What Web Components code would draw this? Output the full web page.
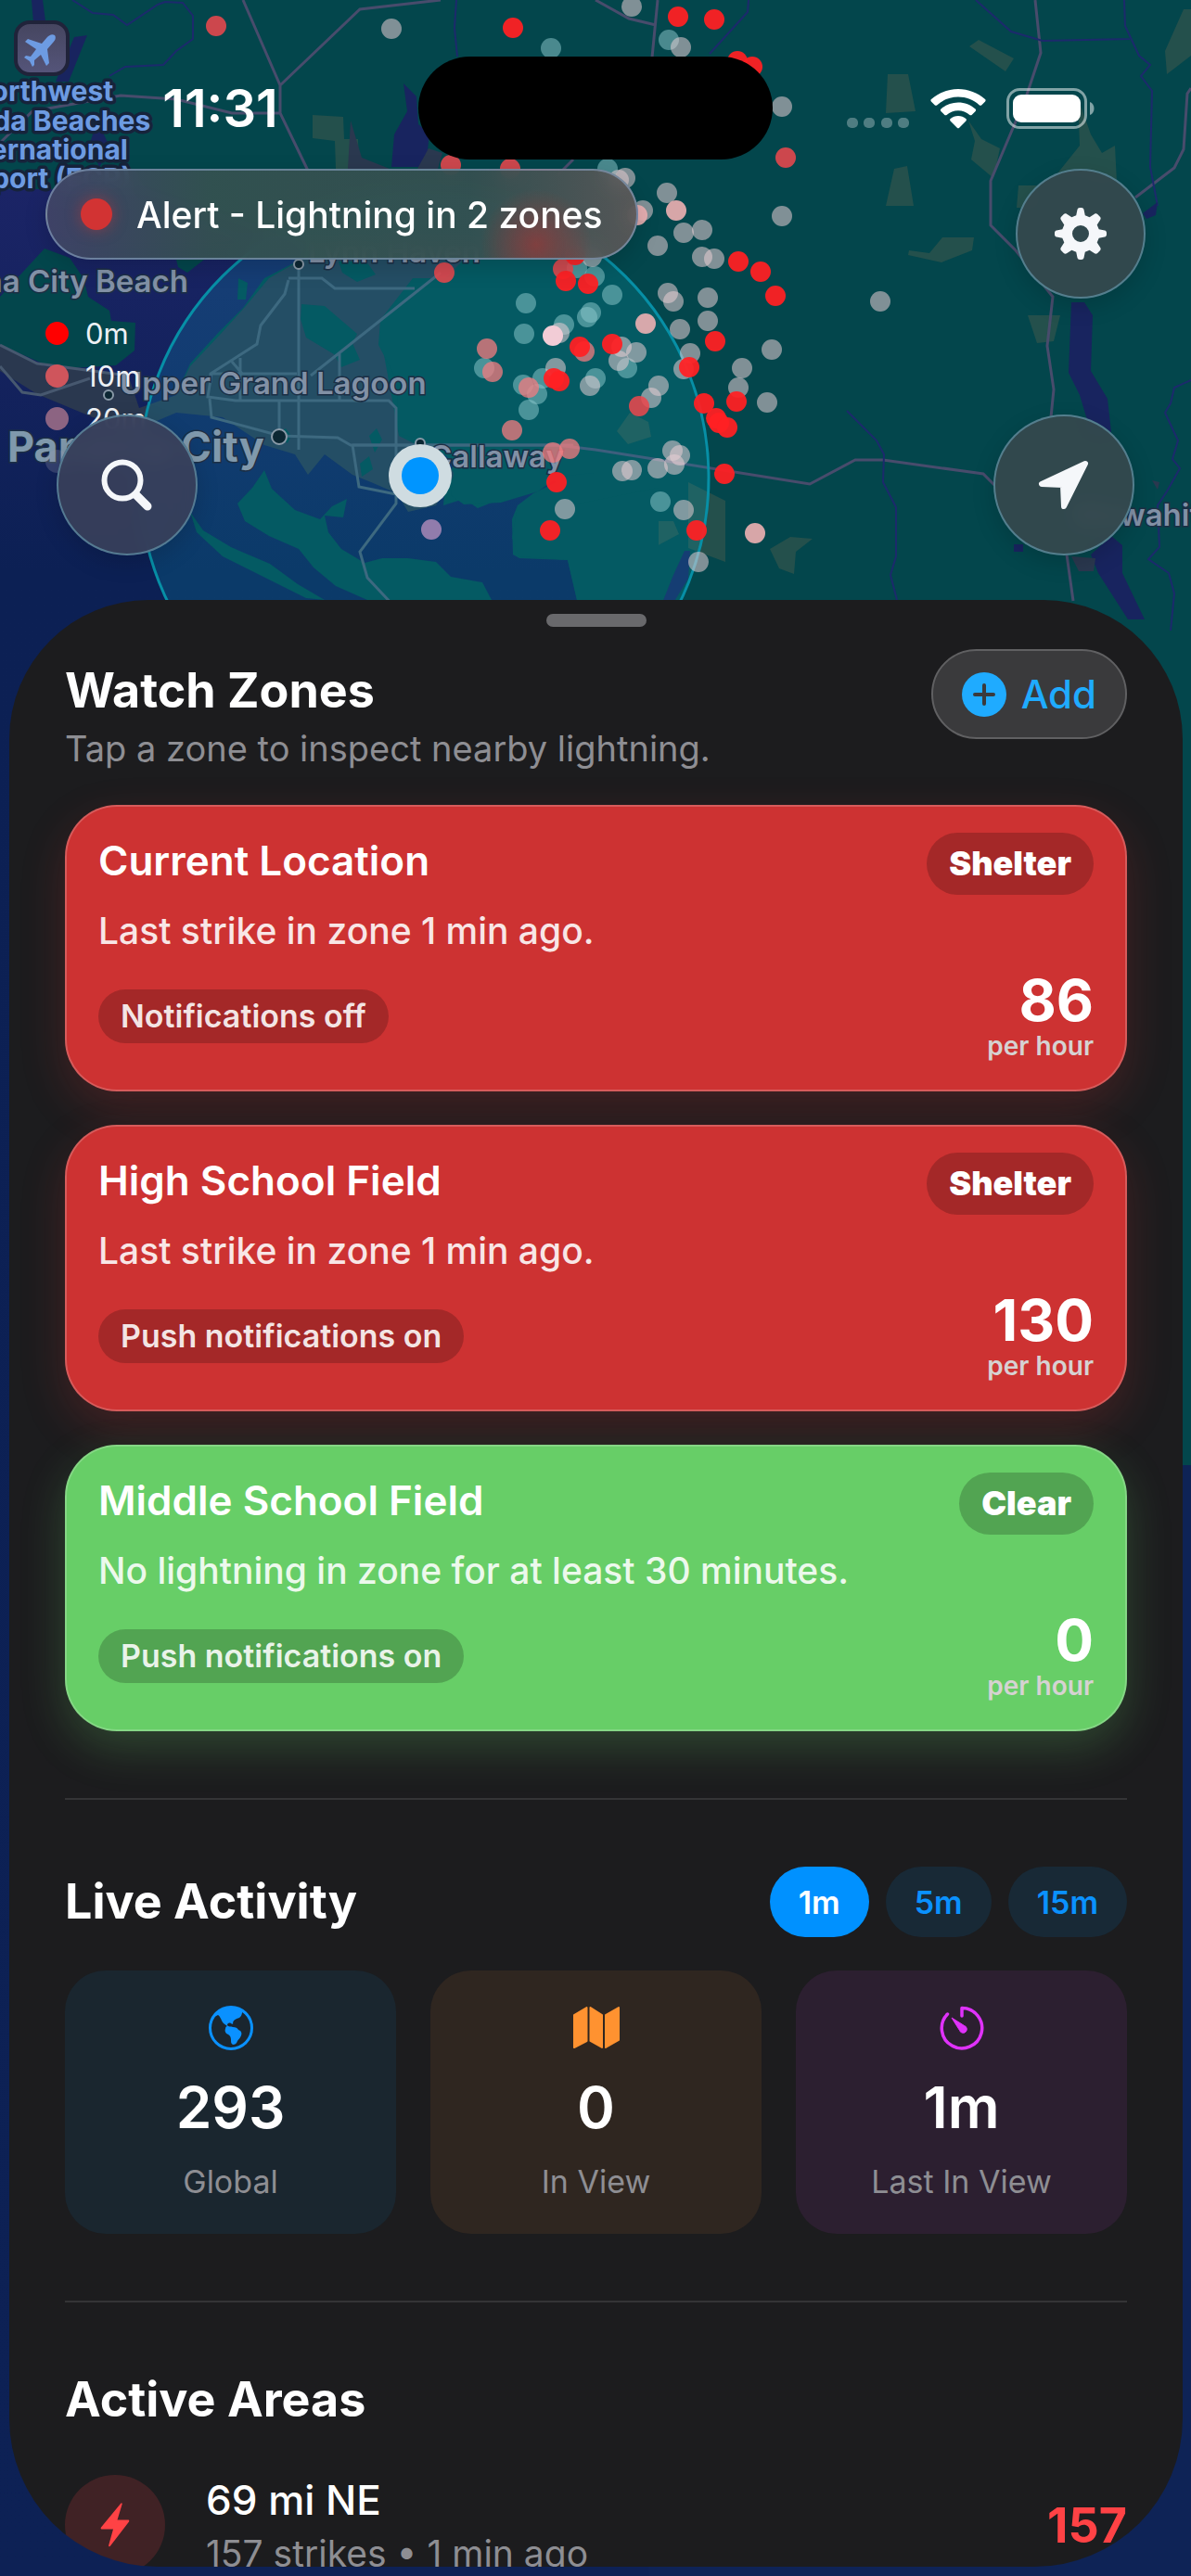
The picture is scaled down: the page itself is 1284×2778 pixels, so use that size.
<!DOCTYPE html>
<html lang="en">
<head>
<meta charset="utf-8">
<meta name="viewport" content="width=device-width, initial-scale=1">
<title>Lightning Watch</title>
<style>
    html, body {
        margin: 0;
        height: 100%;
        background: #0c2054;
    }
    body {
        font-family: Inter, "Liberation Sans", sans-serif;
        color: #fff;
    }
</style>
</head>
<body>
<lightning-app></lightning-app>

<script>
const html = String.raw;

function define(name, markup, setup) {
    const template = document.createElement('template');
    template.innerHTML = markup;
    customElements.define(name, class extends HTMLElement {
        constructor() {
            super();
            this.attachShadow({mode: 'open'});
            this.shadowRoot.appendChild(template.content.cloneNode(true));
        }
        connectedCallback() {
            if (setup) setup(this, this.shadowRoot);
        }
    });
}

// strikes by age: [x, y] on the map canvas
const strikes = {
    old: [[594,52],[721,43],[655,182],[641,298],[622,289],[660,318],[567,327],[565,360],[637,337],[633,342],[608,350],
        [522,397],[676,397],[564,415],[585,408],[579,425],[570,442],[642,408],[712,541]],
    aged: [[422,31],[681,7],[734,51],[843,115],[674,192],[667,194],[719,208],[843,233],[693,227],[737,251],[757,248],
        [709,265],[757,277],[770,279],[638,277],[603,359],[720,316],[726,325],[763,321],[763,346],[733,355],[832,377],
        [800,397],[796,418],[827,434],[670,374],[686,380],[667,389],[744,381],[737,398],[599,397],[636,416],[710,416],
        [702,429],[609,549],[725,486],[733,491],[727,501],[709,505],[671,508],[681,507],[737,550],[753,606],[949,325]],
    pale: [[729,227],[687,232],[696,349],[814,575]],
    white: [[596,362]],
    violet: [[465,571]],
    mid: [[525,376],[531,401],[570,418],[552,464],[596,488],[614,484],[630,379]],
    recent: [[233,28],[486,178],[550,182],[479,294],[847,170],[607,290],[689,438]],
    fresh: [[553,30],[731,18],[770,21],[795,66],[811,72],[796,282],[820,293],[836,319],[620,275],[610,303],[634,306],
        [771,368],[794,433],[625,374],[660,371],[743,396],[597,408],[603,411],[759,435],[772,451],[775,456],[784,461],
        [600,520],[593,572],[781,511],[751,572]]
};

define('map-view', html`
    <style>
        :host { display: block; overflow: hidden; background: #03464c; }
        svg { display: block; width: 100%; height: 100%; }
        .water { fill: #18245f; }
        .town { fill: #2a384f; }
        .park { fill: #24504c; }
        .land { fill: #03464c; }
        .road { fill: none; stroke: #484c6c; stroke-width: 3; }
        .street { fill: none; stroke: #47586f; stroke-width: 3; }
        .river { fill: none; stroke: #1c2a6c; stroke-width: 2; }
        .label { font-size: 33px; font-weight: 600; fill: #8291a6; stroke: #1c2f45; stroke-width: 3; paint-order: stroke; }
        .city { font-size: 45px; font-weight: 700; fill: #8099ac; }
        .poi { font-size: 30px; font-weight: 700; fill: #6d9be2; stroke: #16233b; stroke-width: 7; stroke-linejoin: round; text-anchor: middle; }
        .pin { fill: #0c2733; stroke: #8a9aa8; stroke-width: 2; }
        .old { fill: #8cc8cc; opacity: .52; }
        .aged { fill: #e8cdd3; opacity: .55; }
        .pale { fill: #eeb0b2; opacity: .9; }
        .white { fill: #f2ccd6; }
        .violet { fill: #a084b4; opacity: .9; }
        .mid { fill: #f07c80; opacity: .76; }
        .recent { fill: #e8484d; opacity: .88; }
        .fresh { fill: #ff2023; opacity: .94; }
    </style>
    <svg viewBox="0 0 1284 2778" preserveAspectRatio="xMidYMin slice">
        <defs>
            <linearGradient id="sea" x1="0" y1="0" x2="0" y2="1">
                <stop offset="0" stop-color="#1b2466"/>
                <stop offset=".16" stop-color="#0c2054"/>
                <stop offset="1" stop-color="#0d2155"/>
            </linearGradient>
            <linearGradient id="tile" x1="0" y1="0" x2="0" y2="1">
                <stop offset="0" stop-color="#45455f"/>
                <stop offset="1" stop-color="#55557a"/>
            </linearGradient>
        </defs>
        <path class="land" d="M0 0H1284V1580H0Z"/>
        <path d="M0 1580H1284V2778H0Z" fill="#0e2356"/>

        <path class="park" d="M337 124l33 2 1 24 15 0 1 33-25-1-1-30-24-3zM1045 50l10-7 38 20-9 14zM1256 55l20-45h8v50l-26 20zM957 80l22 0 8 40-32 2zM964 182l14-3 7 43h-30zM1044 130l14 20 20 10-7 32-24-20 4-20zM1162 105l14 40 12 20 14-8 2 40-64-10 24-30zM980 270l22 3 14-17 34 0-2 14-33 13-36-8zM1108 340h35l-7 28-18 2zM1098 200l20 0v24l-22 0z"/>
        <path class="park" d="M665 465l14-20 20 10 3 16-25 8zM692 578l16-16 18 0 6 14-30 16zM830 592l22-13 24 2-18 14-2 24-16-6zM742 520l40 20 0 66-40-15z"/>
        <path class="water" d="M422 180l3-35 14-25-4-30 14 14 2 30 12 10-4 36zM34 0l12 0 4 30-14-6zM80 40l14-2-20 50-14 0zM105 130l14 30-12 20-10-26z"/>
        <path class="town" d="M378 130l12 40 30 12-45 0zM462 160l15 5-5 17-22 0z"/>

        <!-- gulf and bays -->
        <path fill="url(#sea)" d="M0 204H150L330 262 320 282 285 300 262 332 236 358 205 392 190 425 300 455 410 470 430 490 462 500 474 490 482 470 490 500 480 520 478 545 500 538 515 548 535 540 560 524 590 512 600 520 575 532 558 545 552 560 553 598 560 602 612 604 622 647 700 2778H0Z"/>
        <path class="water" d="M1155 326l14 0 9 14-2 60 18 30 4 36-22 0-12-40-12-24zM1176 598l22-20 12 10 0 30 24 50-18 0-32-50zM1093 587h10v8h-10z"/>
        <path class="water" d="M738 594l6 0-2 30-16 26-12 0 12-30z"/>
        <path class="town" d="M1155 600l26 2-2 14-16 0zM1242 518l8 2-2 8z"/>

        <path class="land" d="M0 320L48 268 75 278 90 300 95 320 118 335 120 346 146 348 145 378 125 394 60 398 0 372Z"/>
        <path class="land" d="M190 280l30 0-18 14-10-6z"/>
        <path class="town" d="M0 372L48 395 100 398 140 410 150 440 190 426 205 395 238 360 265 330 290 300 325 280H500L480 300 430 340 412 372 430 470 450 480 475 484 490 512 470 545 440 552 428 532 400 520 380 512 350 490 332 512 318 490 285 480 240 450 190 445 150 462 100 450 40 425 0 400Z"/>
        <path class="land" d="M325 328l25 2 35 30-5 10 8 18-20 8-8-14-30-18-6-20zM365 282l30 0 10 14-20 8-16-10zM257 300l10 5-2 18-9 0zM300 468l8-6 6 8-4 8zM398 470l8-8 6 12-8 14zM388 500l10-8 4 14-12 8z"/>
        <path class="land" d="M410 345L445 300H640V510L602 514 580 530 540 542 500 544 486 534 490 500 460 474 430 468 428 410 408 372Z"/>
        <path class="land" d="M558 546L610 546 710 526V647H622L612 604 560 600 552 580Z"/>
        <path class="land" d="M285 507L293 527 318 550 345 560 358 546 374 538 370 558 350 556 354 574 368 592 393 607 412 602 440 602 470 606 486 622 520 628 530 647H396L362 632 338 612 322 592 290 578 264 562 256 543 272 526Z"/>
        <path class="land" d="M205 552L219 572 249 590 291 608 321 630 350 647 330 645 280 620 240 600 212 574Z"/>

        <!-- roads, streets and rivers -->
        <path class="road" d="M262 0l40 92v30l30 62M302 92l86-82 87-10M0 154l35-34 95-17 60 4 60 15h52M709 0l-6 62M642 0l36 20 29 7M1116 0l6 57-16 48-38 90v48l27 27 40 50-6 53 7 47-3 30M1150 598l7 50M1284 95l-4 6-4 60-10 20-42 32"/>
        <path class="road" d="M380 480h220l42 5 231 37 49-26h30l108 15 12 12M600 190l18-18"/>
        <path class="street" d="M0 372l40 20 90 12M0 395l24 28 20 3 53-18M322 285v200M311 300h36l14 11h86M311 302l-4 15-26 34-4 20-50 32v10M475 294L335 405M366 380v52M228 403h92M259 386v46M228 403l-4 25 30 4h165l8 8v86M226 430l2 20 74 20 62 2 14 8h240M301 432v40M380 480l7 45 40 8 0 10-39 52 8 28 30 32M250 390l12 14"/>
        <path class="river" d="M78 0l22 14 22 2 15 11 33-22 8-3 19 1 11 14v25l-18 13-14 15-41 2-17 10M492 0l-2 30 3 31M807 0l-1 13-41 45M913 443l32 32 8 15-1 30 14 27v53l-6 20 7 27M1052 0l38 34 34 10 94-2M1212 0l1 28 15 32 12 10-10 12 12 16-2 82 8 42"/>
        <path class="river" stroke-width="5" d="M1284 410l-18 8-4 17-6 10 14 30-6 20 8 10-14 25-10 15 2 45-12 13 22 15 6 22-4 40"/>
        <path class="water" d="M1248 218l-16 12 4 6 10-4z"/>

        <circle cx="457" cy="515" r="307" fill="#0abed7" fill-opacity=".17" stroke="#078fa6" stroke-width="3"/>

        <!-- airport -->
        <rect x="17" y="24" width="56" height="56" rx="15" fill="url(#tile)" stroke="#20233a" stroke-width="4"/>
        <path fill="#6d9be2" d="M59 38c-3-2-6 0-8 2l-6 7-15-5-3 3 12 8-6 8-5-1-2 2 6 4 3 6 2-2 0-5 7-6 6 12 3-3-2-15 6-7c2-2 4-5 2-8z"/>
        <text class="label poi" x="45" y="109">Northwest</text>
        <text class="label poi" x="45" y="141">Florida Beaches</text>
        <text class="label poi" x="45" y="172">International</text>
        <text class="label poi" x="45" y="203">Airport (ECP)</text>

        <text class="label" x="203" y="315" text-anchor="end">Panama City Beach</text>
        <text class="label" x="332" y="283">Lynn Haven</text>
        <text class="label" x="129" y="425">Upper Grand Lagoon</text>
        <text class="label city" x="8" y="498">Panama City</text>
        <text class="label" x="463" y="504">Callaway</text>
        <text class="label" x="1156" y="567">Wewahitchka</text>
        <circle class="pin" cx="322" cy="285" r="5"/>
        <circle class="pin" cx="117" cy="426" r="5"/>
        <circle class="pin" cx="301" cy="471" r="8"/>
        <circle class="pin" cx="453" cy="478" r="5"/>

        <g id="strikes"></g>
        <circle cx="453" cy="513" r="34" fill="#cfdce1"/>
        <circle cx="453" cy="513" r="20" fill="#0095ff"/>
    </svg>
`, (host, root) => {
    const group = root.getElementById('strikes');
    for (const [age, points] of Object.entries(strikes)) {
        for (const [x, y] of points) {
            const dot = document.createElementNS('http://www.w3.org/2000/svg', 'circle');
            dot.setAttribute('class', age);
            dot.setAttribute('cx', x);
            dot.setAttribute('cy', y);
            dot.setAttribute('r', 11);
            group.appendChild(dot);
        }
    }
});

define('status-bar', html`
    <style>
        :host {
            display: grid;
            grid-template-columns: 1fr 382px 1fr;
            align-items: center;
            justify-items: center;
            padding: 61px 24px 0;
        }
        .time { font-size: 56px; font-weight: 600; }
        .island { width: 100%; height: 111px; border-radius: 56px; background: #000; }
        .signals { display: flex; align-items: center; gap: 22px; }
        svg { display: block; height: 44px; }
    </style>
    <div class="time">11:31</div>
    <div class="island"></div>
    <div class="signals">
        <svg width="68" viewBox="0 0 68 44" fill="#fff" fill-opacity=".3">
            <rect x="0" y="32" width="12" height="11" rx="5"/><rect x="18" y="32" width="12" height="11" rx="5"/>
            <rect x="37" y="32" width="12" height="11" rx="5"/><rect x="55" y="32" width="12" height="11" rx="5"/>
        </svg>
        <svg width="60" viewBox="0 0 60 44" fill="#fff">
            <path d="M30 1c11 0 21 4 29 11 .8.700.8 1.700.1 2.400l-4 4c-.6.600-1.500.6-2.200 0C46.500 12.600 38.600 9.500 30 9.500S13.500 12.600 7.100 18.400c-.7.600-1.600.6-2.200 0l-4-4c-.7-.7-.7-1.700.1-2.400C9 5 19 1 30 1z"/>
            <path d="M30 15.500c7 0 13.500 2.600 18.500 7 .8.700.8 1.700.1 2.400l-4 4c-.6.600-1.500.6-2.200 0C39 26 34.700 24.200 30 24.200S21 26 17.600 28.900c-.7.600-1.600.6-2.200 0l-4-4c-.7-.7-.7-1.700.1-2.400 5-4.400 11.500-7 18.500-7z"/>
            <path d="M30 30c3.200 0 6 1.100 8.300 3 .8.700.8 1.700.1 2.400l-7.200 7.400c-.7.700-1.700.7-2.400 0l-7.200-7.400c-.7-.7-.7-1.700.1-2.400 2.300-1.900 5.100-3 8.300-3z"/>
        </svg>
        <svg width="96" viewBox="0 0 96 44">
            <rect x="1.500" y="1.500" width="84" height="41" rx="13" fill="none" stroke="#fff" stroke-opacity=".5" stroke-width="3"/>
            <rect x="7" y="7" width="73" height="30" rx="9" fill="#fff"/>
            <path d="M90 15c6 2 6 12 0 14z" fill="#fff" fill-opacity=".5"/>
        </svg>
    </div>
`);

define('alert-pill', html`
    <style>
        :host {
            display: flex;
            align-items: center;
            gap: 26px;
            box-sizing: border-box;
            height: 98px;
            padding: 0 36px;
            border: 2px solid rgba(135, 160, 190, .65);
            border-radius: 49px;
            background:
                radial-gradient(circle at 83% 85%, rgba(170, 50, 50, .6), transparent 60px),
                linear-gradient(90deg, rgba(65, 69, 102, .92), rgba(53, 82, 80, .92) 28%, rgba(54, 80, 80, .92) 72%, rgba(92, 88, 88, .92));
            backdrop-filter: blur(10px);
            box-shadow: 0 8px 24px rgba(0, 0, 0, .15);
            font-size: 39px;
            font-weight: 500;
            white-space: nowrap;
        }
        .dot { width: 34px; height: 34px; border-radius: 50%; background: #d23333; box-shadow: 0 0 16px rgba(210, 51, 51, .5); }
    </style>
    <span class="dot"></span>
    <span><slot></slot></span>
`);

define('glass-button', html`
    <style>
        :host { display: block; }
        button {
            display: grid;
            place-items: center;
            box-sizing: border-box;
            width: var(--size, 152px);
            height: var(--size, 152px);
            padding: 0;
            border: 2px solid rgba(100, 150, 170, .7);
            border-radius: 50%;
            background: var(--glass, rgba(53, 72, 78, .93));
            backdrop-filter: blur(10px);
            box-shadow: 0 8px 24px rgba(0, 0, 0, .15);
            color: #f5f7fa;
            cursor: pointer;
        }
    </style>
    <button type="button"><slot></slot></button>
`, (host, root) => {
    root.querySelector('button').setAttribute('aria-label', host.getAttribute('label'));
});

define('age-legend', html`
    <style>
        :host { display: block; }
        ul { list-style: none; margin: 0; padding: 0; }
        li { display: flex; align-items: center; gap: 18px; height: 46px; font-size: 31px; color: #edf1f5; }
        i { width: 25px; height: 25px; border-radius: 50%; }
    </style>
    <ul>
        <li><i style="background: #f00"></i>0m</li>
        <li><i style="background: #cf555c"></i>10m</li>
        <li><i style="background: #8c6482"></i>20m</li>
        <li><i style="background: rgba(160, 160, 180, .25)"></i></li>
    </ul>
`);

define('section-head', html`
    <style>
        :host { display: flex; justify-content: space-between; align-items: center; }
        h2 { margin: 0; font-size: 52px; line-height: 66px; font-weight: 700; }
        .actions { display: flex; gap: 18px; }
    </style>
    <h2><slot></slot></h2>
    <div class="actions"><slot name="actions"></slot></div>
`);

define('add-button', html`
    <style>
        :host { display: block; }
        button {
            display: flex;
            align-items: center;
            gap: 16px;
            box-sizing: border-box;
            height: 97px;
            padding: 0 31px;
            border: 2px solid #606062;
            border-radius: 49px;
            background: #3a3a3c;
            color: #1fabff;
            font: 500 42px Inter, sans-serif;
            cursor: pointer;
        }
    </style>
    <button type="button">
        <svg width="48" height="48" viewBox="0 0 48 48"><circle cx="24" cy="24" r="24" fill="#1fabff"/><path d="M24 14v20M14 24h20" stroke="#3a3a3c" stroke-width="4" stroke-linecap="round"/></svg>
        <slot></slot>
    </button>
`);

define('zone-card', html`
    <style>
        :host {
            display: block;
            box-sizing: border-box;
            padding: 28px 34px 30px;
            border: 2px solid rgba(255, 255, 255, .2);
            border-radius: 56px;
            background: #cd3232;
            box-shadow: 0 18px 48px rgba(205, 50, 50, .22);
        }
        :host([status="Clear"]) { background: #67ce67; box-shadow: 0 18px 48px rgba(103, 206, 103, .24); }
        .row { display: flex; justify-content: space-between; }
        h3 { margin: 0; font-size: 44px; line-height: 60px; font-weight: 600; }
        p { margin: 16px 0 20px; font-size: 39px; line-height: 46px; font-weight: 500; opacity: .88; }
        .tag { padding: 0 24px; border-radius: 34px; background: rgba(0, 0, 0, .2); }
        .status { font-size: 36px; line-height: 67px; font-weight: 900; }
        .push { font-size: 34px; line-height: 58px; font-weight: 600; color: rgba(255, 255, 255, .88); }
        .bottom { align-items: center; }
        .rate { text-align: right; font-size: 62px; line-height: 64px; font-weight: 700; }
        small { display: block; font-size: 28px; line-height: 34px; font-weight: 600; color: #d6d2d2; }
    </style>
    <div class="row"><h3></h3><span class="tag status"></span></div>
    <p><slot></slot></p>
    <div class="row bottom">
        <span class="tag push"></span>
        <div class="rate"><span></span><small>per hour</small></div>
    </div>
`, (host, root) => {
    root.querySelector('h3').textContent = host.getAttribute('name');
    root.querySelector('.status').textContent = host.getAttribute('status');
    root.querySelector('.push').textContent = host.getAttribute('push');
    root.querySelector('.rate span').textContent = host.getAttribute('rate');
});

define('time-chip', html`
    <style>
        :host { display: block; }
        button {
            height: 76px;
            padding: 0 31px;
            border: 0;
            border-radius: 38px;
            background: #182936;
            color: #0a91ff;
            font: 600 34px Inter, sans-serif;
            cursor: pointer;
        }
        :host([selected]) button { background: #0091ff; color: #fff; }
    </style>
    <button type="button"><slot></slot></button>
`, (host, root) => {
    root.querySelector('button').setAttribute('aria-pressed', host.hasAttribute('selected'));
});

define('stat-tile', html`
    <style>
        :host {
            display: flex;
            flex-direction: column;
            align-items: center;
            gap: 26px;
            padding: 38px 0;
            border-radius: 44px;
            background: var(--tint);
        }
        .value { font-size: 62px; line-height: 72px; font-weight: 600; }
        .label { font-size: 34px; line-height: 36px; color: #8e8e93; }
    </style>
    <slot></slot>
    <span class="value"></span>
    <span class="label"></span>
`, (host, root) => {
    root.querySelector('.value').textContent = host.getAttribute('value');
    root.querySelector('.label').textContent = host.getAttribute('label');
});

define('area-row', html`
    <style>
        :host { display: flex; align-items: center; gap: 44px; }
        .badge { display: grid; place-items: center; flex: none; width: 108px; height: 108px; border-radius: 50%; background: #402225; }
        .info { flex: 1; }
        h3 { margin: 0 0 8px; font-size: 44px; line-height: 54px; font-weight: 500; }
        p { margin: 0; font-size: 39px; line-height: 46px; color: #8e8e93; white-space: nowrap; }
        .count { font-size: 52px; font-weight: 700; color: #ff4245; }
    </style>
    <div class="badge">
        <svg width="32" height="48" viewBox="0 0 32 48"><path d="M22 1c1-1.500 2-.8 1.600.8L18.500 18.500H30c1.300 0 1.600 1 1 2L11 46.500c-1 1.300-2.200.7-1.800-.8L14 28.500H2c-1.300 0-1.700-1-1-2z" fill="#ff4245"/></svg>
    </div>
    <div class="info"><h3></h3><p><slot></slot></p></div>
    <span class="count"></span>
`, (host, root) => {
    root.querySelector('h3').textContent = host.getAttribute('name');
    root.querySelector('.count').textContent = host.getAttribute('count');
});

define('bottom-sheet', html`
    <style>
        :host {
            display: block;
            box-sizing: border-box;
            overflow-y: auto;
            scrollbar-width: none;
            padding: 15px 60px 0;
            border-radius: 150px 150px 160px 160px;
            background: #1c1c1e;
        }
        .grabber { width: 108px; height: 14px; margin: 0 auto 24px; border-radius: 7px; background: #69696c; }
    </style>
    <div class="grabber"></div>
    <slot></slot>
`);

define('lightning-app', html`
    <style>
        :host { display: flex; flex-direction: column; position: relative; height: 100vh; overflow: hidden; }
        map-view { position: absolute; inset: 0; }
        status-bar, .controls, bottom-sheet { position: relative; }
        .controls { padding: 10px 49px 48px; }
        .top, .tools { display: flex; justify-content: space-between; align-items: flex-start; }
        .gear { --size: 140px; }
        .search { --glass: rgba(56, 64, 90, .93); }
        .lower { display: grid; margin-top: 14px; height: 263px; }
        .lower > * { grid-area: 1 / 1; }
        .tools { align-self: end; padding: 0 12px; }
        bottom-sheet { flex: 1; min-height: 0; margin: 0 9px 10px 10px; }
        .intro { display: flex; justify-content: space-between; align-items: flex-start; margin-bottom: 38px; }
        .intro div { padding-top: 12px; }
        .intro p { margin: 6px 0 0; font-size: 38px; line-height: 46px; color: #8e8e93; }
        .zones { display: grid; gap: 36px; }
        hr { margin: 72px 0; border: 0; height: 2px; background: #343436; }
        .stats { display: grid; grid-template-columns: repeat(3, 1fr); gap: 37px; margin-top: 36px; }
        area-row { margin-top: 48px; }
        svg { display: block; }
    </style>
    <map-view></map-view>
    <status-bar></status-bar>
    <div class="controls">
        <div class="top">
            <alert-pill>Alert - Lightning in 2 zones</alert-pill>
            <glass-button class="gear" label="Settings">
                <svg width="56" height="56" viewBox="0 0 56 56" fill="currentColor" fill-rule="evenodd">
                    <path d="M24.500 2c.3-1.300 1.300-2 2.500-2h2c1.200 0 2.200.7 2.500 2l1.300 6.300 4.800 2L43 6.800c1.100-.7 2.300-.6 3.200.3l2.700 2.700c.9.900 1 2.100.3 3.200l-3.500 5.400 2 4.800 6.300 1.300c1.300.3 2 1.300 2 2.500v2c0 1.200-.7 2.200-2 2.500l-6.300 1.300-2 4.800 3.500 5.400c.7 1.100.6 2.300-.3 3.200l-2.700 2.700c-.9.900-2.100 1-3.200.3l-5.400-3.500-4.800 2-1.300 6.300c-.3 1.300-1.300 2-2.500 2h-2c-1.200 0-2.200-.7-2.500-2l-1.300-6.300-4.800-2-5.400 3.500c-1.100.7-2.300.6-3.200-.3l-2.700-2.700c-.9-.9-1-2.100-.3-3.200l3.500-5.400-2-4.800L2 31.500c-1.300-.3-2-1.300-2-2.500v-2c0-1.200.7-2.200 2-2.500l6.300-1.300 2-4.800L6.800 13c-.7-1.100-.6-2.300.3-3.200l2.700-2.700c.9-.9 2.100-1 3.200-.3l5.400 3.500 4.800-2zM28 19a9 9 0 1 0 0 18a9 9 0 1 0 0-18z"/>
                </svg>
            </glass-button>
        </div>
        <div class="lower">
            <age-legend></age-legend>
            <div class="tools">
                <glass-button class="search" label="Search">
                    <svg width="56" height="56" viewBox="0 0 56 56" fill="none" stroke="currentColor" stroke-linecap="round">
                        <circle cx="23" cy="23" r="19.500" stroke-width="6"/><path d="M38 39L50 51" stroke-width="9"/>
                    </svg>
                </glass-button>
                <glass-button label="My location">
                    <svg width="56" height="56" viewBox="0 0 56 56" fill="currentColor" stroke="currentColor" stroke-width="6" stroke-linejoin="round">
                        <path d="M51 5L4 27l23 1 1 23z"/>
                    </svg>
                </glass-button>
            </div>
        </div>
    </div>
    <bottom-sheet>
        <div class="intro">
            <div>
                <section-head>Watch Zones</section-head>
                <p>Tap a zone to inspect nearby lightning.</p>
            </div>
            <add-button>Add</add-button>
        </div>
        <div class="zones">
            <zone-card name="Current Location" status="Shelter" push="Notifications off" rate="86">Last strike in zone 1 min ago.</zone-card>
            <zone-card name="High School Field" status="Shelter" push="Push notifications on" rate="130">Last strike in zone 1 min ago.</zone-card>
            <zone-card name="Middle School Field" status="Clear" push="Push notifications on" rate="0">No lightning in zone for at least 30 minutes.</zone-card>
        </div>
        <hr>
        <section-head>Live Activity
            <time-chip slot="actions" selected>1m</time-chip>
            <time-chip slot="actions">5m</time-chip>
            <time-chip slot="actions">15m</time-chip>
        </section-head>
        <div class="stats">
            <stat-tile style="--tint: #1a262f" value="293" label="Global">
                <svg width="48" height="48" viewBox="0 0 48 48">
                    <circle cx="24" cy="24" r="22.500" fill="none" stroke="#0a91ff" stroke-width="3"/>
                    <path fill="#0a91ff" d="M4 13C9 4 17 1 24 1c5 0 10 1 13 5-2 3-1 5-4 7-3 1-6 2-7 5 1 2-1 2-2 1-2-1-4 0-4 2 1 2 4 1 6 2 3 0 5 1 6 3 3 1 4 3 3 6-1 3-3 4-4 6-1 3-3 4-5 4-2-1-2-3-2-5 0-3-1-5-3-6-3-1-4-4-3-6 0-2 1-3 2-3-2-2-5-3-6-6-1-2-2-5-4-6z"/>
                </svg>
            </stat-tile>
            <stat-tile style="--tint: #2f2620" value="0" label="In View">
                <svg width="50" height="48" viewBox="0 0 50 48" fill="#ff9230" stroke="#ff9230" stroke-width="2" stroke-linejoin="round">
                    <path d="M1 10L14.500 2v36L1 45zM18.500 2L31 10v35L18.500 38zM35 10L49 2v35L35 45z"/>
                </svg>
            </stat-tile>
            <stat-tile style="--tint: #2c1f30" value="1m" label="Last In View">
                <svg width="48" height="48" viewBox="0 0 48 48">
                    <path d="M24 11V2.500A21.700 21.700 0 1 1 8.500 9" fill="none" stroke="#e032fa" stroke-width="3.500" stroke-linecap="round" stroke-linejoin="round"/>
                    <path d="M13 13l13.500 8.500a4 4 0 1 1-5 5z" fill="#e032fa" stroke="#e032fa" stroke-linejoin="round"/>
                </svg>
            </stat-tile>
        </div>
        <hr>
        <section-head>Active Areas</section-head>
        <area-row name="69 mi NE" count="157">157 strikes • 1 min ago</area-row>
    </bottom-sheet>
`);
</script>
</body>
</html>
